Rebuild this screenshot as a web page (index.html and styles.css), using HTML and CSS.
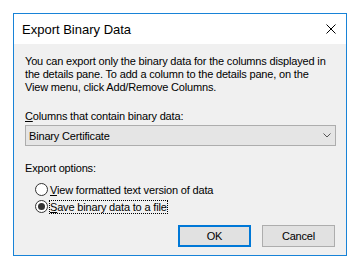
FILE: index.html
```html
<!DOCTYPE html>
<html>
<head>
<meta charset="utf-8">
<link rel="stylesheet" href="styles.css">
</head>
<body>
<div class="dialog">
  <div class="titlebar">
    <span class="title">Export Binary Data</span>
    <svg class="close" width="10" height="10" viewBox="0 0 10 10"><path d="M0.5 0.5 L9.5 9.5 M9.5 0.5 L0.5 9.5" stroke="#000" stroke-width="1" fill="none"/></svg>
  </div>
  <div class="content">
    <p class="desc">You can export only the binary data for the columns displayed in<br>the details pane. To add a column to the details pane, on the<br>View menu, click Add/Remove Columns.</p>
    <div class="label"><u>C</u>olumns that contain binary data:</div>
    <div class="select">
      <span>Binary Certificate</span>
      <svg width="8" height="5" viewBox="0 0 8 5"><path d="M0.5 0.5 L4 4 L7.5 0.5" stroke="#555" stroke-width="1" fill="none"/></svg>
    </div>
    <div class="label options">Export options:</div>
    <div class="radios">
      <div class="radio"><span class="circle"></span><span class="rlabel"><u>V</u>iew formatted text version of data</span></div>
      <div class="radio checked"><span class="circle"><span class="dot"></span></span><span class="rlabel focus"><u>S</u>ave binary data to a file</span></div>
    </div>
    <div class="buttons">
      <div class="btn default">OK</div>
      <div class="btn">Cancel</div>
    </div>
  </div>
</div>
</body>
</html>
```
FILE: styles.css
```css
* { box-sizing: border-box; }
html, body { margin: 0; padding: 0; background: #fff; }
body {
  padding: 13px 0 0 13px;
  font-family: "Liberation Sans", Arial, sans-serif;
  font-size: 11px;
  letter-spacing: -0.17px;
  color: #000;
}
.dialog {
  width: 334px;
  height: 243px;
  border: 1px solid #1883d7;
  background: #f0f0f0;
  display: flex;
  flex-direction: column;
}
.titlebar {
  height: 30px;
  background: #fff;
  display: flex;
  align-items: center;
  justify-content: space-between;
  padding: 0 10px 0 8px;
  flex-shrink: 0;
}
.title { font-size: 13px; letter-spacing: 0; line-height: 14px; padding-top: 1px; }
.close { display: block; }
.content {
  padding: 11px 10px 0 11px;
  flex: 1;
  display: flex;
  flex-direction: column;
}
.desc { margin: 0; line-height: 13px; white-space: nowrap; }
.label { margin-top: 16px; line-height: 13px; }
.label u, .rlabel u { text-decoration: underline; }
.select {
  margin-top: 2px;
  height: 21px;
  width: 311px;
  background: #e5e5e5;
  border: 1px solid #adadad;
  display: flex;
  align-items: center;
  justify-content: space-between;
  padding: 0 4px 0 3px;
}
.options { margin-top: 16px; }
.radios { display: flex; flex-direction: column; gap: 4px; margin-top: 8px; padding-left: 10px; }
.radio { display: flex; align-items: center; gap: 1px; height: 13px; }
.circle {
  width: 13px; height: 13px; border-radius: 50%;
  border: 1px solid #333; background: #fff;
  display: flex; align-items: center; justify-content: center;
  flex-shrink: 0;
}
.dot { width: 7px; height: 7px; border-radius: 50%; background: #333; }
.rlabel { padding: 0; line-height: 12px; border: 1px dotted transparent; }
.rlabel.focus { border-color: #000; }
.buttons {
  display: flex;
  justify-content: flex-end;
  gap: 11px;
  margin-top: 12px;
  padding-right: 1px;
}
.btn {
  width: 73px; height: 22px;
  border: 1px solid #adadad;
  background: #e1e1e1;
  display: flex; align-items: center; justify-content: center;
}
.btn.default { border: 2px solid #0078d7; }
```
